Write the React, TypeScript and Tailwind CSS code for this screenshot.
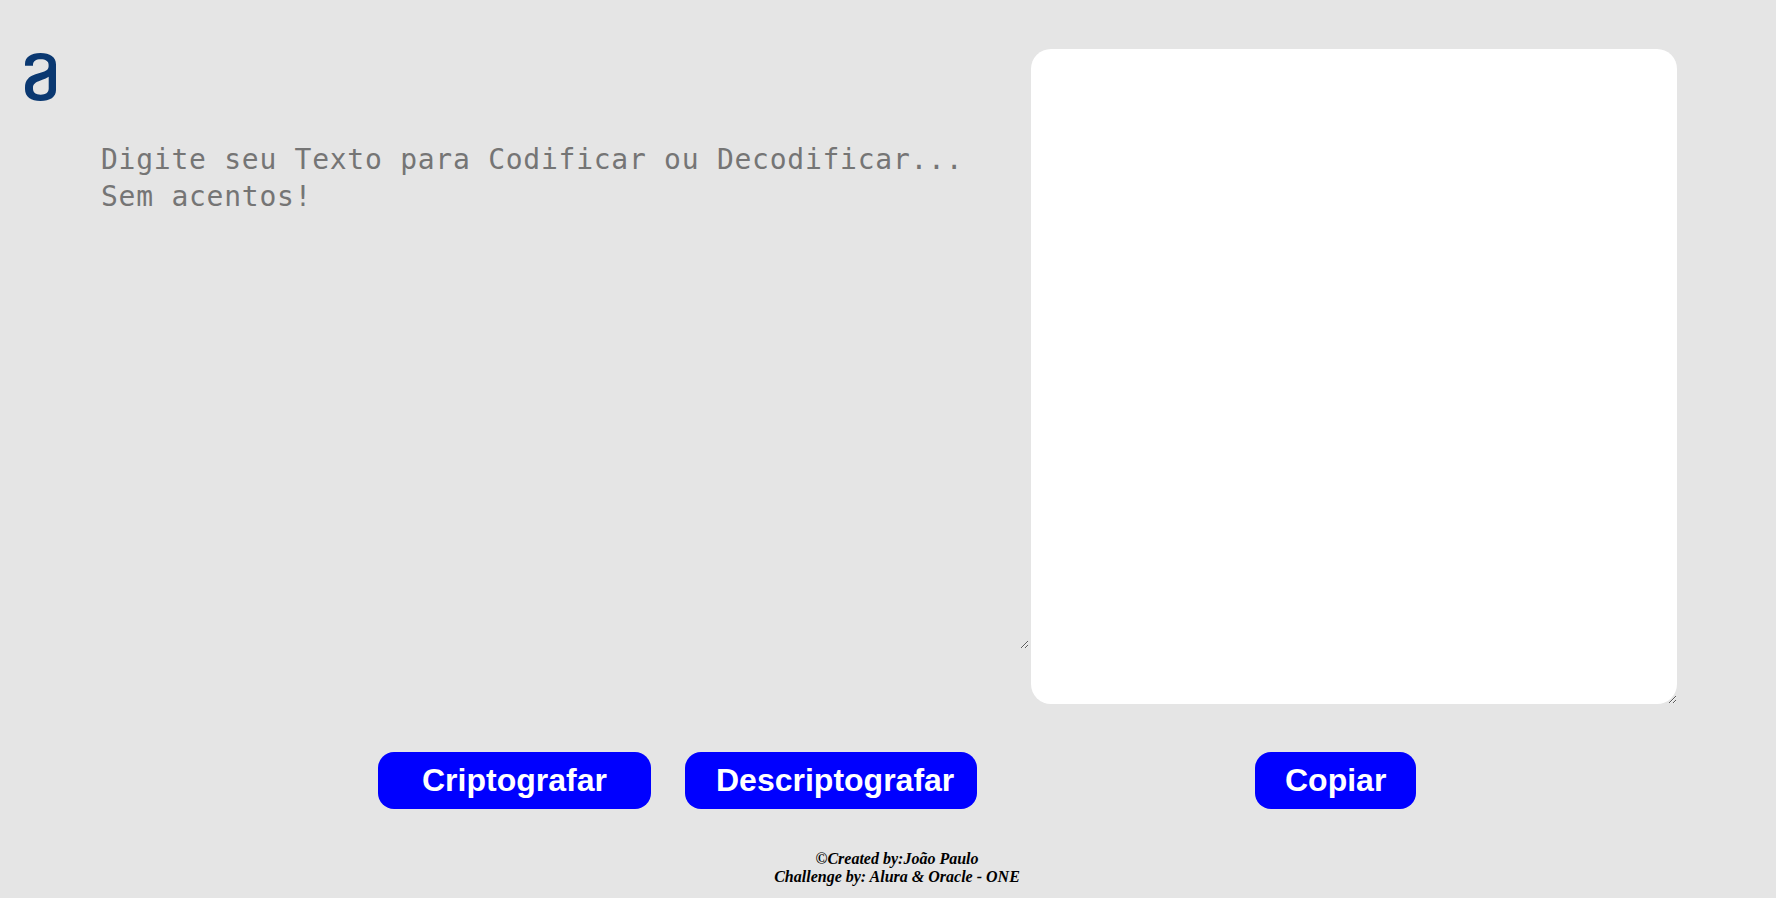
import React from "react";

function Logo() {
  return (
    <svg className="mt-[53px] ml-[25px] h-[48px] w-[31px] shrink-0" viewBox="0 0 31 48" fill="#0a3871">
      <path
        fillRule="evenodd"
        d="M0 12.8V11C0 4 6 0 15.5 0S31 4 31 11.5V37C31 44 25 48 15.5 48S0 44 0 36V34.5C0 27.5 3.5 23.5 10.5 21.2L17 19.2C21.5 17.8 23.6 16.3 23.6 13.2V11.8C23.6 8 20.5 6.2 15.7 6.2S8 8.2 8 12V12.8ZM23.7 23.8C21.5 25.4 19 26.3 15.5 27.5C10.5 29.2 8 31.2 8 34.5V35.5C8 39.7 10.8 41.7 15.7 41.7S23.7 39.7 23.7 35.5Z"
      />
    </svg>
  );
}

function ActionButton({ label, className }: { label: string; className: string }) {
  return (
    <button
      type="button"
      className={`h-[57px] rounded-2xl bg-[#0000ff] text-left font-['Liberation_Sans',sans-serif] text-[32px] leading-[37px] font-bold text-white ${className}`}
    >
      {label}
    </button>
  );
}

export default function App() {
  return (
    <div className="flex h-[898px] w-[1776px] flex-col overflow-hidden bg-[#e5e5e5]">
      <main className="flex h-[704px] items-start">
        <Logo />
        <textarea
          className="mt-[129px] ml-[29px] block h-[520px] w-[944px] overflow-hidden bg-transparent px-[16px] pt-[12px] font-['DejaVu_Sans_Mono',monospace] text-[28px] leading-[37px] tracking-[0.74px] outline-none placeholder:text-[#757575]"
          placeholder={"Digite seu Texto para Codificar ou Decodificar...\nSem acentos!"}
        />
        <textarea className="mt-[49px] ml-[2px] block h-[655px] w-[646px] rounded-[20px] bg-white p-4 text-[28px] outline-none" />
      </main>
      <div className="mt-[48px] flex">
        <ActionButton label="Criptografar" className="ml-[378px] w-[273px] pl-[44px]" />
        <ActionButton label="Descriptografar" className="ml-[34px] w-[292px] pl-[31px]" />
        <ActionButton label="Copiar" className="ml-[278px] w-[161px] pl-[30px]" />
      </div>
      <footer className="mt-[41px] pl-[18px] text-center font-['Liberation_Serif',serif] text-[16px] leading-[18px] font-bold text-black italic">
        <p>©Created by:João Paulo</p>
        <p>Challenge by: Alura &amp; Oracle - ONE</p>
      </footer>
    </div>
  );
}
